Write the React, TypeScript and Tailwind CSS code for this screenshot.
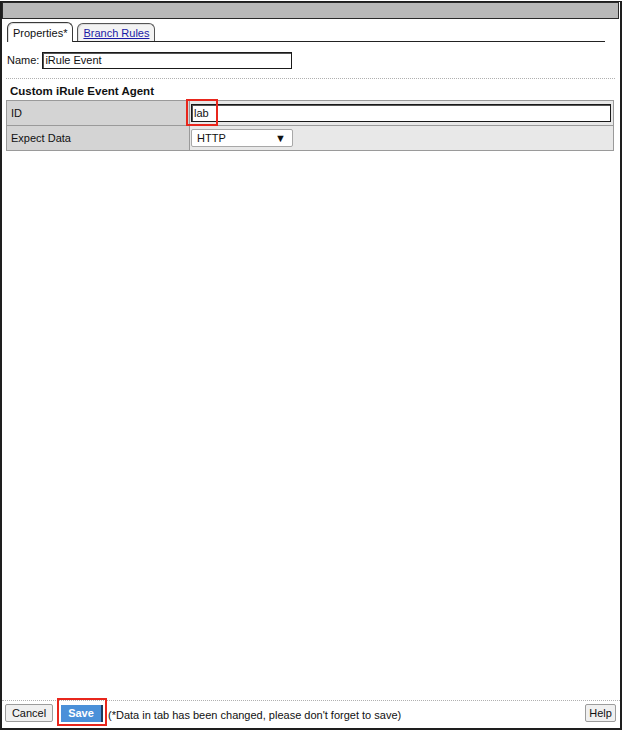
import React from "react";

const font = { fontFamily: '"Liberation Sans", Arial, sans-serif' };

const FieldRow: React.FC<{ label: string; children: React.ReactNode; last?: boolean }> = ({
  label,
  children,
  last,
}) => (
  <div className={`grid grid-cols-[183px_1fr] ${last ? "h-[24px]" : "h-[25px] border-b border-[#9a9a9a]"}`}>
    <div className="bg-[#d4d4d4] border-r border-[#9a9a9a] flex items-center pl-[4px] text-[11px] text-[#111]">
      {label}
    </div>
    <div className="bg-[#e8e8e8] flex items-center pl-[1px] pr-[2px] relative">{children}</div>
  </div>
);

export default function App() {
  return (
    <div className="w-[624px] h-[731px] bg-white pt-px text-[#111]" style={font}>
      <div className="w-[622px] h-[729px] border-t border-x-2 border-b-2 border-[#1e1e1e] flex flex-col">
        {/* title strip */}
        <div className="h-[17px] bg-[#b9b9b9] border border-[#2a2a2a] mr-px" />

        {/* tabs */}
        <div className="flex items-end border-b border-[#222] ml-[5px] mr-[15px] mt-[4px] h-[19px]">
          <div className="-mb-px h-[20px] bg-white border border-b-0 border-[#3a3a3a] rounded-t-[6px] px-[5px] pt-[2px] flex items-center text-[11px] shadow-[inset_1px_1px_0_#ddd]">
            Properties*
          </div>
          <div className="ml-[4px] h-[18px] bg-[#f3f3f3] border border-b-0 border-[#555] rounded-t-[6px] px-[5px] pt-[2px] flex items-center text-[11px] shadow-[inset_1px_1px_0_#ddd]">
            <a className="text-[#1a1aa6] underline cursor-pointer">Branch Rules</a>
          </div>
        </div>

        {/* name */}
        <div className="flex items-center mt-[10px] pl-[5px] h-[17px] text-[11px]">
          <span>Name:</span>
          <div className="ml-[3px] w-[250px] h-[17px] border border-[#1a1a1a] shadow-[inset_1px_1px_0_#555] bg-white flex items-center pl-[2px]">
            iRule Event
          </div>
        </div>

        <div className="mt-[9px] ml-[4px] mr-[5px] border-t border-dotted border-[#b0b0b0]" />

        <div className="mt-[5px] pl-[8px] text-[11.5px] font-bold leading-[14px]">Custom iRule Event Agent</div>

        {/* agent properties */}
        <div className="mt-[2px] ml-[4px] w-[608px] border border-[#9a9a9a]">
          <FieldRow label="ID">
            <div className="w-full h-[18px] bg-white border border-[#1a1a1a] shadow-[inset_1px_1px_0_#555] flex items-center pl-[2px] text-[11px]">
              lab
            </div>
            <div className="absolute left-[-4px] top-[-2px] w-[32px] h-[27px] border-2 border-[#e8261c]" />
          </FieldRow>
          <FieldRow label="Expect Data" last>
            <div className="w-[102px] h-[18px] bg-white border border-[#a8a8a8] rounded-[2px] flex items-center justify-between pl-[5px] pr-[6px] text-[11px]">
              <span>HTTP</span>
              <span className="text-[11px]">▼</span>
            </div>
          </FieldRow>
        </div>

        <div className="flex-1" />

        {/* footer */}
        <div className="border-t border-dotted border-[#b0b0b0] h-[28px] flex items-start pt-[3px] text-[11px]">
          <button className="ml-[3px] w-[48px] h-[18px] bg-[#f0f0f0] border border-[#9c9c9c] rounded-[2px] text-[11px] leading-none">
            Cancel
          </button>
          <div className="relative ml-[8px] mt-px">
            <button className="w-[42px] h-[17px] bg-[#4a90d9] border-r-2 border-[#1d3b5e] text-white font-bold text-[11px] leading-none">
              Save
            </button>
            <div className="absolute left-[-4px] top-[-7px] w-[50px] h-[28px] border-2 border-[#e8261c]" />
          </div>
          <span className="ml-[5px] mt-[3px]">(*Data in tab has been changed, please don't forget to save)</span>
          <div className="flex-1" />
          <button className="mr-[4px] w-[31px] h-[18px] bg-[#f0f0f0] border border-[#9c9c9c] rounded-[2px] text-[11px] leading-none">
            Help
          </button>
        </div>
      </div>
    </div>
  );
}
